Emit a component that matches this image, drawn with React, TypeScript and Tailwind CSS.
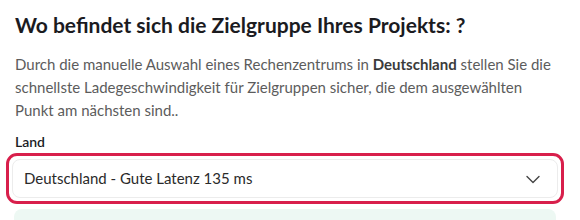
import React from "react";

export default function App() {
  return (
    <div className="w-[580px] h-[220px] overflow-hidden bg-white pl-[15px] pr-[25px] pt-[11px] font-['Lato',sans-serif]">
      <h2 className="text-[21px] leading-[28px] font-bold text-[#1b1b1f]">
        Wo befindet sich die Zielgruppe Ihres Projekts: ?
      </h2>
      <p className="mt-[14px] text-[15px] leading-[23px] text-[#5c5c5c]">
        Durch die manuelle Auswahl eines Rechenzentrums in{" "}
        <span className="font-bold text-[#3b3b3b]">Deutschland</span> stellen Sie die
        schnellste Ladegeschwindigkeit für Zielgruppen sicher, die dem ausgewählten Punkt am
        nächsten sind..
      </p>
      <div className="mt-[10px] text-[14px] leading-[20px] font-semibold text-[#1b1b1f]">Land</div>
      <div className="mt-[1px] -mx-[9px] rounded-[11px] border-[3px] border-[#d81f4b] p-[3px]">
        <div className="flex h-[39px] items-center justify-between rounded-[8px] border border-[#ececec] bg-white pl-[11px] pr-[16px]">
          <span className="text-[15px] text-[#2a2a2a]">Deutschland - Gute Latenz 135 ms</span>
          <svg width="16" height="16" viewBox="0 0 16 16" fill="none" stroke="#444" strokeWidth="1.4" strokeLinecap="round" strokeLinejoin="round">
            <path d="M2 5.5l6 6 6-6" />
          </svg>
        </div>
      </div>
      <div className="mt-[5px] -mx-[1px] h-[20px] rounded-[8px] bg-[#edf8f3]" />
    </div>
  );
}
